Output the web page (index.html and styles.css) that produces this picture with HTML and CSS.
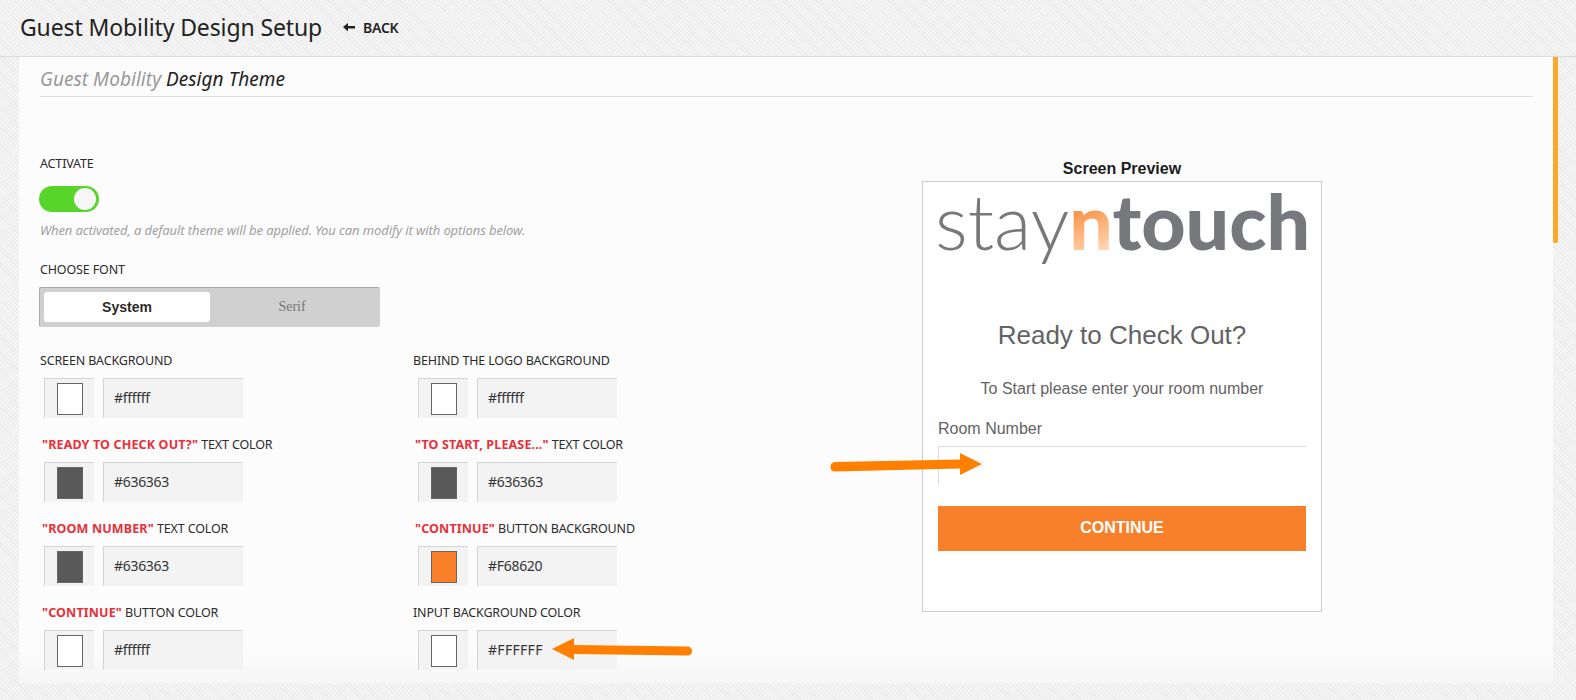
FILE: index.html
```html
<!DOCTYPE html>
<html lang="en">
<head>
<meta charset="utf-8">
<title>Guest Mobility Design Setup</title>
<link rel="stylesheet" href="styles.css">
</head>
<body>
<header class="topbar">
  <h1 class="page-title">Guest Mobility Design Setup</h1>
  <a class="back" href="#">
    <svg class="back-icon" width="12" height="10" viewBox="0 0 12 10"><path d="M0 5 5 1v3h7v2.500H5v3z" fill="#222"/></svg>
    <span>BACK</span>
  </a>
</header>
<main class="panel">
  <div class="scrollbar"></div>
  <h2 class="section-title"><span class="muted">Guest Mobility</span> Design Theme</h2>
  <div class="columns">
    <section class="form">
      <div class="label">ACTIVATE</div>
      <div class="toggle"><div class="knob"></div></div>
      <p class="help">When activated, a default theme will be applied. You can modify it with options below.</p>
      <div class="label">CHOOSE FONT</div>
      <div class="segment">
        <div class="seg-item seg-active">System</div>
        <div class="seg-item seg-serif">Serif</div>
      </div>
      <div class="fields">
        <div class="field">
          <div class="label">SCREEN BACKGROUND</div>
          <div class="color-row"><div class="swatch-box"><div class="swatch sw-white"></div></div><div class="value">#ffffff</div></div>
        </div>
        <div class="field">
          <div class="label">BEHIND THE LOGO BACKGROUND</div>
          <div class="color-row"><div class="swatch-box"><div class="swatch sw-white"></div></div><div class="value">#ffffff</div></div>
        </div>
        <div class="field">
          <div class="label"><b class="red">"READY TO CHECK OUT?"</b> TEXT COLOR</div>
          <div class="color-row"><div class="swatch-box"><div class="swatch sw-dark"></div></div><div class="value">#636363</div></div>
        </div>
        <div class="field">
          <div class="label"><b class="red">"TO START, PLEASE..."</b> TEXT COLOR</div>
          <div class="color-row"><div class="swatch-box"><div class="swatch sw-dark"></div></div><div class="value">#636363</div></div>
        </div>
        <div class="field">
          <div class="label"><b class="red">"ROOM NUMBER"</b> TEXT COLOR</div>
          <div class="color-row"><div class="swatch-box"><div class="swatch sw-dark"></div></div><div class="value">#636363</div></div>
        </div>
        <div class="field">
          <div class="label"><b class="red">"CONTINUE"</b> BUTTON BACKGROUND</div>
          <div class="color-row"><div class="swatch-box"><div class="swatch sw-orange"></div></div><div class="value">#F68620</div></div>
        </div>
        <div class="field">
          <div class="label"><b class="red">"CONTINUE"</b> BUTTON COLOR</div>
          <div class="color-row"><div class="swatch-box"><div class="swatch sw-white"></div></div><div class="value">#ffffff</div></div>
        </div>
        <div class="field">
          <div class="label">INPUT BACKGROUND COLOR</div>
          <div class="color-row"><div class="swatch-box"><div class="swatch sw-white"></div></div><div class="value value-caps">#FFFFFF</div></div>
        </div>
      </div>
    </section>
    <section class="preview">
      <div class="preview-title">Screen Preview</div>
      <div class="preview-box">
        <div class="logo"><span class="logo-stay">stay</span><span class="logo-n">n</span><span class="logo-touch">touch</span></div>
        <div class="pv-heading">Ready to Check Out?</div>
        <div class="pv-sub">To Start please enter your room number</div>
        <div class="pv-label">Room Number</div>
        <div class="pv-input"></div>
        <div class="pv-button">CONTINUE</div>
      </div>
    </section>
  </div>
</main>
<svg class="arrow arrow-right" width="156" height="24" viewBox="0 0 156 24"><path d="M5 9 130 6.500V0L152 11 130 22V15.500L5 18.500Q0.500 18.500 0.500 14Q0.500 9.500 5 9Z" fill="#ff8000"/></svg>
<svg class="arrow arrow-left" width="142" height="24" viewBox="0 0 142 24"><path d="M0 11 22 0V7L135 8.500Q140 8.500 140 13Q140 17.500 135 17.500L22 16V22Z" fill="#ff8000"/></svg>
</body>
</html>
```

FILE: styles.css
```css
* { box-sizing: border-box; }
html, body { height: 100%; }
body {
  margin: 0;
  overflow: hidden;
  position: relative;
  font-family: "Noto Sans", "Open Sans", sans-serif;
  color: #2b2b2b;
  background-color: #f2f2f2;
  background-image:
    repeating-linear-gradient(45deg, #ececec 0, #ececec 1px, transparent 1px, transparent 3px),
    repeating-linear-gradient(-45deg, #f7f7f7 0, #f7f7f7 1px, transparent 1px, transparent 3px);
}
.topbar {
  height: 57px;
  display: flex;
  align-items: center;
  padding: 0 0 2px 20px;
  border-bottom: 1px solid #dcdcdc;
}
.page-title {
  margin: 0;
  font-size: 23px;
  font-weight: 400;
  letter-spacing: -0.12px;
  color: #222;
}
.back {
  display: flex;
  align-items: center;
  margin-left: 21px;
  font-size: 14px;
  font-weight: 600;
  letter-spacing: -0.25px;
  color: #222;
  text-decoration: none;
}
.back-icon { margin-right: 8px; }
.panel {
  position: relative;
  margin-left: 19px;
  width: 1534px;
  height: 626px;
  background: linear-gradient(#fcfcfc 0, #fcfcfc 595px, #f6f6f6 626px);
}
.scrollbar {
  position: absolute;
  left: 100%;
  top: 0;
  width: 5px;
  height: 186px;
  background: #ffa726;
  border-radius: 0 0 2px 2px;
}
.section-title {
  margin: 0 20px 0 21px;
  height: 40px;
  line-height: 44px;
  font-size: 19px;
  font-weight: 400;
  font-style: italic;
  letter-spacing: 0.05px;
  color: #222;
  border-bottom: 1px solid #dedede;
}
.muted { color: #999; }
.columns { display: flex; }
.form { width: 903px; padding: 56px 0 0 21px; }
.label {
  height: 20px;
  line-height: 22px;
  font-size: 12.5px;
  letter-spacing: -0.15px;
  color: #2b2b2b;
  white-space: nowrap;
}
.red { color: #e9303a; font-weight: 700; letter-spacing: 0.15px; margin-left: 2px; }
.toggle {
  width: 60px;
  height: 26px;
  margin: 13px 0 0 -1px;
  padding: 2px 3px;
  display: flex;
  justify-content: flex-end;
  border-radius: 13px;
  background: #57d52b;
}
.knob { width: 22px; height: 22px; border-radius: 50%; background: #f6f6f6; }
.help {
  margin: 8px 0 19px;
  height: 20px;
  line-height: 20px;
  font-size: 13px;
  font-style: italic;
  letter-spacing: -0.1px;
  color: #a0a0a0;
  white-space: nowrap;
}
.segment {
  display: flex;
  width: 341px;
  height: 40px;
  margin: 8px 0 0 -1px;
  padding: 4px 0 5px 4px;
  background: #d0d0d0;
  border-top: 1px solid #aaa;
  border-left: 1px solid #aaa;
  border-radius: 2px;
}
.seg-item {
  flex: 0 0 166px;
  display: flex;
  align-items: center;
  justify-content: center;
}
.seg-active {
  background: #fff;
  border-radius: 3px;
  font-family: "Liberation Sans", sans-serif;
  font-size: 14px;
  font-weight: 700;
  color: #2b2b2b;
}
.seg-serif {
  flex-basis: 164px;
  font-family: "Liberation Serif", serif;
  font-size: 14px;
  color: #777;
}
.fields {
  display: grid;
  grid-template-columns: 373px 373px;
  row-gap: 16px;
  margin-top: 23px;
}
.color-row { display: flex; margin: 8px 0 0 4px; }
.field:nth-child(even) .color-row { margin-left: 5px; }
.swatch-box {
  width: 50px;
  height: 40px;
  display: flex;
  align-items: center;
  justify-content: center;
  background: #f3f3f3;
  border-top: 1px solid #d4d4d4;
  border-left: 1px solid #d4d4d4;
}
.swatch { width: 26px; height: 32px; border: 1px solid #666; }
.sw-white { background: #fff; }
.sw-dark { background: #595959; }
.sw-orange { background: #f98029; }
.value {
  width: 140px;
  height: 40px;
  margin-left: 9px;
  padding-left: 10px;
  line-height: 37px;
  font-size: 14px;
  letter-spacing: -0.3px;
  color: #333;
  background: #f3f3f3;
  border-top: 1px solid #d4d4d4;
  border-left: 1px solid #d4d4d4;
}
.value-caps { letter-spacing: 0.3px; }
.preview { width: 400px; font-family: "Liberation Sans", Arial, sans-serif; }
.preview-title {
  margin-top: 63px;
  height: 21px;
  line-height: 18px;
  text-align: center;
  font-size: 16px;
  font-weight: 700;
  color: #1c1c1c;
}
.preview-box {
  height: 431px;
  padding: 0 15px;
  background: #fff;
  border: 1px solid #ccc;
}
.logo {
  height: 92px;
  margin-left: -3px;
  line-height: 76px;
  font-family: Lato, sans-serif;
  font-size: 77px;
  white-space: nowrap;
  color: #77787b;
}
.logo-stay { font-weight: 300; }
.logo-n {
  font-weight: 900;
  color: transparent;
  background: linear-gradient(160deg, #f98029 25%, #ffdcbc 85%);
  -webkit-background-clip: text;
  background-clip: text;
}
.logo-touch { font-weight: 900; }
.pv-heading {
  margin-top: 46px;
  height: 30px;
  line-height: 30px;
  text-align: center;
  font-size: 26px;
  color: #636363;
}
.pv-sub {
  margin-top: 29px;
  height: 20px;
  line-height: 20px;
  text-align: center;
  font-size: 16px;
  color: #636363;
}
.pv-label {
  margin-top: 20px;
  height: 20px;
  line-height: 20px;
  font-size: 16px;
  color: #636363;
}
.pv-input {
  height: 40px;
  margin-top: 7px;
  background: #fff;
  border-top: 1px solid #ddd;
  border-left: 1px solid #ddd;
}
.pv-button {
  height: 45px;
  margin-top: 20px;
  line-height: 44px;
  text-align: center;
  font-size: 16px;
  font-weight: 700;
  color: #fff;
  background: #f9802b;
}
.arrow { position: absolute; }
.arrow-right { left: 830px; top: 453px; }
.arrow-left { left: 552px; top: 638px; }
```
